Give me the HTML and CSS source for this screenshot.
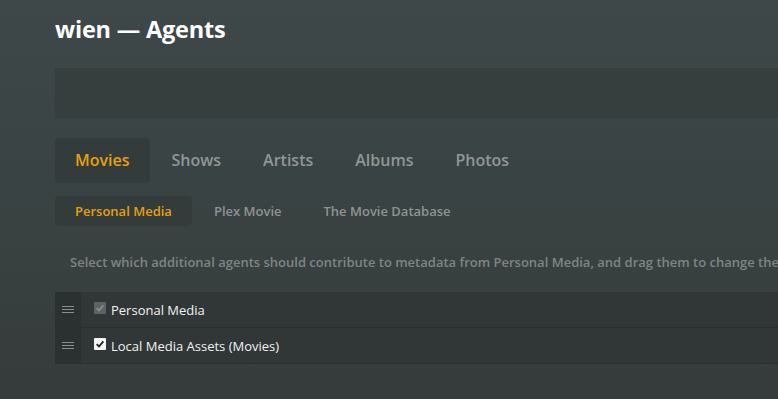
FILE: index.html
```html
<!DOCTYPE html>
<html lang="en">
<head>
    <meta charset="UTF-8">
    <meta name="viewport" content="width=device-width, initial-scale=1.0">
    <title>wien — Agents</title>
    <link rel="stylesheet" href="styles.css">
</head>
<body>
    <div class="container">
        <h1 class="page-title">wien — Agents</h1>
        <div class="toolbar"></div>

        <nav class="tabs">
            <a class="tab active">Movies</a>
            <a class="tab">Shows</a>
            <a class="tab">Artists</a>
            <a class="tab">Albums</a>
            <a class="tab">Photos</a>
        </nav>

        <nav class="sub-tabs">
            <a class="sub-tab active">Personal Media</a>
            <a class="sub-tab">Plex Movie</a>
            <a class="sub-tab">The Movie Database</a>
        </nav>

        <p class="help-text">Select which additional agents should contribute to metadata from Personal Media, and drag them to change the</p>

        <ul class="agent-list">
            <li class="agent-row">
                <span class="handle"><i></i><i></i><i></i></span>
                <label class="agent-label">
                    <span class="check disabled">
                        <svg viewBox="0 0 12 12" width="10" height="10"><path d="M2 6.2 L4.8 9 L10 2.8" fill="none" stroke="#8a8d8d" stroke-width="2.2"/></svg>
                    </span>
                    Personal Media
                </label>
            </li>
            <li class="agent-row">
                <span class="handle"><i></i><i></i><i></i></span>
                <label class="agent-label">
                    <span class="check checked">
                        <svg viewBox="0 0 12 12" width="10" height="10"><path d="M2 6.2 L4.8 9 L10 2.8" fill="none" stroke="#222" stroke-width="2.2"/></svg>
                    </span>
                    Local Media Assets (Movies)
                </label>
            </li>
        </ul>
    </div>
</body>
</html>
```

FILE: styles.css
```css
html, body {
    height: 100%;
}

body {
    margin: 0;
    padding: 0;
    font-family: "Open Sans", "Liberation Sans", sans-serif;
    background: linear-gradient(to bottom, #3e4849 0%, #3a4343 45%, #363b3b 100%);
    color: white;
    overflow: hidden;
}

.container {
    width: 1100px;
    padding: 13px 0 0 55px;
}

.page-title {
    font-size: 23.5px;
    font-weight: 700;
    margin: 0;
    line-height: 33px;
    letter-spacing: -0.2px;
}

.toolbar {
    height: 50px;
    margin-top: 22px;
    background: #363e3e;
}

.tabs {
    display: flex;
    gap: 2px;
    margin-top: 20px;
}

.tab {
    padding: 0 20px;
    height: 45px;
    line-height: 45px;
    font-size: 16px;
    font-weight: 600;
    color: #929696;
    border-radius: 4px;
}

.tab.active {
    background: #343b3b;
    color: #e5a00d;
}

.sub-tabs {
    display: flex;
    gap: 2px;
    margin-top: 13px;
}

.sub-tab {
    padding: 0 20px;
    height: 30px;
    line-height: 30px;
    font-size: 13px;
    font-weight: 600;
    color: #8f9393;
    border-radius: 4px;
}

.sub-tab.active {
    background: #343b3b;
    color: #e5a00d;
}

.help-text {
    margin: 22px 0 0 15px;
    font-size: 13px;
    font-weight: 600;
    color: #7f8585;
    line-height: 28px;
    white-space: nowrap;
}

.agent-list {
    list-style: none;
    margin: 16px 0 0;
    padding: 0;
}

.agent-row {
    display: flex;
    height: 35px;
    background: #313737;
    border-bottom: 1px solid #2a2e2e;
}

.handle {
    width: 26px;
    background: #2b3030;
    display: flex;
    flex-direction: column;
    justify-content: center;
    align-items: center;
    gap: 2px;
}

.handle i {
    display: block;
    width: 12px;
    height: 1px;
    background: #8a8e8e;
}

.agent-label {
    display: flex;
    align-items: center;
    gap: 5px;
    padding-left: 13px;
    font-size: 13px;
    color: #f2f2f2;
}

.check {
    width: 12px;
    height: 12px;
    border-radius: 1px;
    display: flex;
    align-items: center;
    justify-content: center;
    margin-top: -4px;
}

.check.disabled {
    background: #5d6262;
}

.check.checked {
    background: #f5f5f5;
}
```
